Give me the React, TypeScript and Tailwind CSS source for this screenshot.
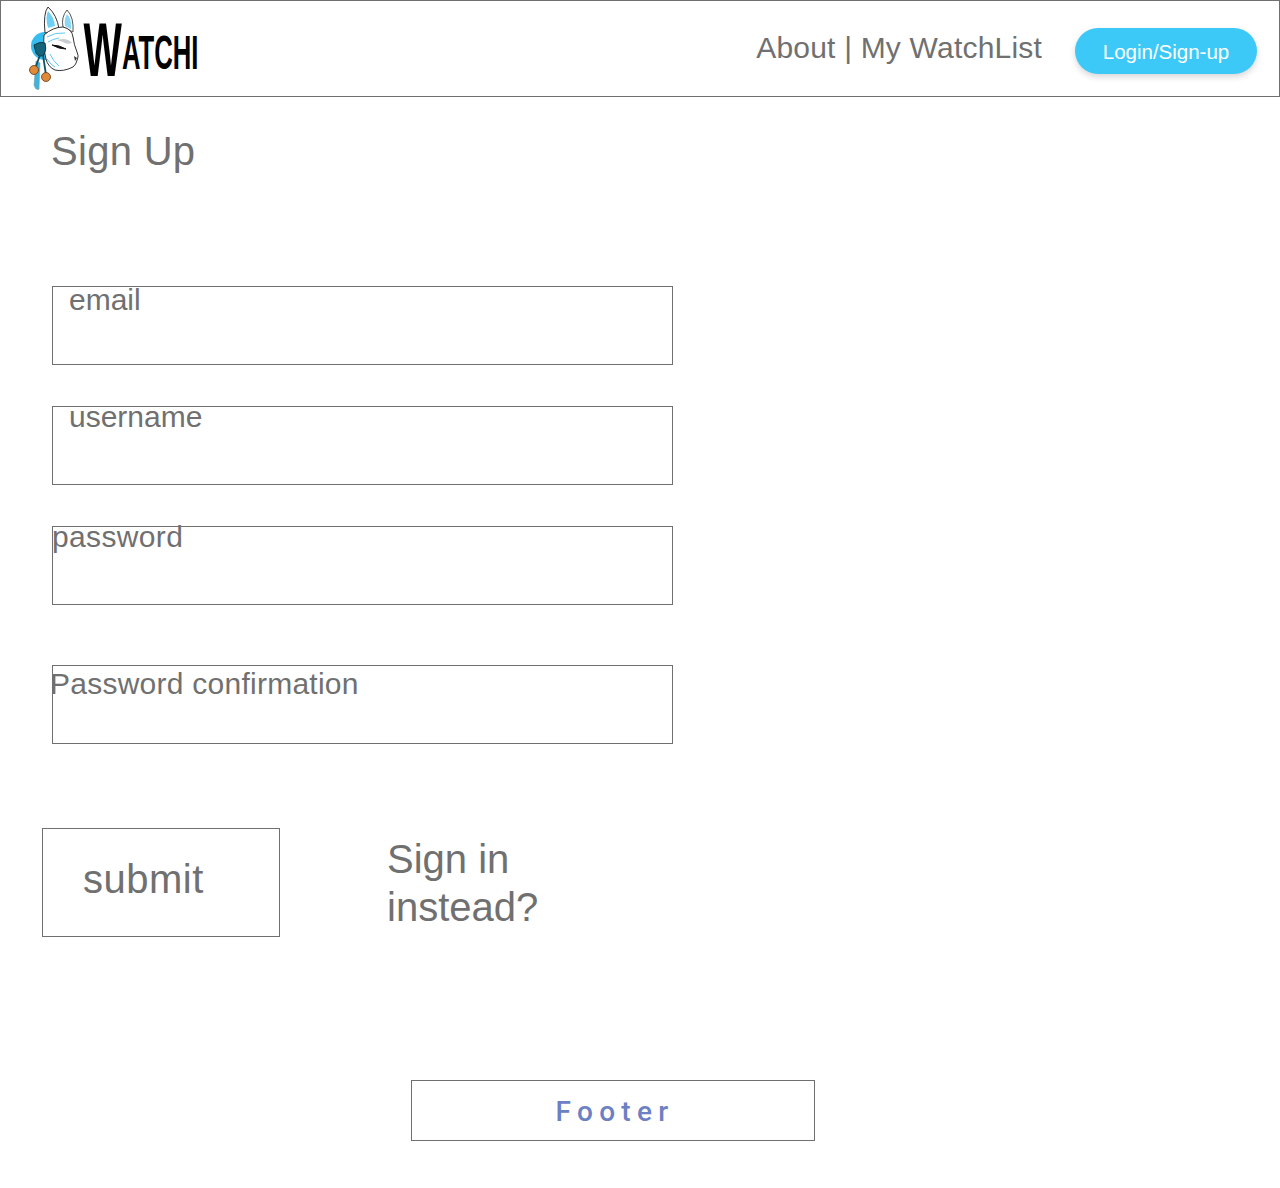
const labelClass = 'text-[30px] leading-[36px] text-[#707070] whitespace-nowrap';

function Logo() {
  return (
    <svg width="180" height="90" viewBox="25 5 180 90" className="block shrink-0" aria-label="Watchi">
      {/* blue disc behind the mask */}
      <circle cx="43" cy="47" r="14" fill="#35bdf0" />
      {/* ribbon and bells */}
      <path d="M34 62 L32 86 Q34 92 37 90 L38 64 Z" fill="#3cb4dc" stroke="#8a9aa0" strokeWidth="0.6" />
      <path d="M38 56 L33 70 M41 56 L44 76" stroke="#14505f" strokeWidth="1.8" fill="none" />
      <circle cx="32" cy="71" r="4.5" fill="#e08a35" stroke="#5a3a1c" strokeWidth="0.8" />
      <circle cx="44" cy="78" r="4.5" fill="#e08a35" stroke="#5a3a1c" strokeWidth="0.8" />
      {/* ears */}
      <path d="M46 8 Q41 14 43 34 L57 30 Q55 16 46 8 Z" fill="#fff" stroke="#333" strokeWidth="1" />
      <path d="M46 12 Q43 18 46 29 L53 27 Q52 18 46 12 Z" fill="#6fd0f5" />
      <path d="M65 11 Q59 18 61 28 L71 33 Q72 18 65 11 Z" fill="#fff" stroke="#555" strokeWidth="1" />
      <path d="M65 15 Q62 20 63 27 L69 30 Q70 20 65 15 Z" fill="#8ad8f5" />
      {/* face */}
      <path
        d="M42 36 Q51 28 61 28 Q70 30 71 38 Q72 46 75 53 Q77 57 75.5 60 Q74 66 71 68 Q61 73 53 71 Q46 68 44 60 Q40 48 42 36 Z"
        fill="#fff"
        stroke="#333"
        strokeWidth="1"
      />
      <path d="M45 38 Q53 33 63 34 M46 43 Q51 40 57 39 M48 55 Q51 62 57 67 M45 60 Q49 66 53 68" stroke="#5cc8f0" strokeWidth="1" fill="none" />
      <path d="M55 41 Q65 38 70 44 Q65 46 61 43 Z" fill="#c9ccce" />
      <path d="M50 46 Q57 46 64 50 Q57 50 50 46 Z" fill="#111" stroke="#111" strokeWidth="1" />
      <path d="M72 57 L75 59 L73 62 Z" fill="#333" />
      {/* knot */}
      <path d="M32 46 Q38 42 43 44 Q45 50 42 56 Q37 59 34 54 Z" fill="#14647a" stroke="#0c3a47" strokeWidth="1" />
      {/* wordmark */}
      <g transform="translate(81.5 0) scale(0.535 1)" fill="#000" fontFamily='"Liberation Sans", sans-serif' fontWeight="700">
        <text y="77">
          <tspan fontSize="76">W</tspan>
          <tspan fontSize="48" dy="-7">ATCHI</tspan>
        </text>
      </g>
    </svg>
  );
}

function Field({ label, offset }: { label: string; offset: string }) {
  return (
    <div className="h-[79px] w-[621px] border border-[#707070]">
      <div className={`${labelClass} ${offset}`}>{label}</div>
    </div>
  );
}

export default function App() {
  return (
    <div className="h-[1188px] w-[1280px] overflow-hidden bg-white font-['Liberation_Sans',sans-serif] text-[#707070]">
      <header className="flex h-[97px] items-center border border-[#707070] pl-[26px] pr-[22px]">
        <Logo />
        <nav className="ml-auto mb-[2px] whitespace-nowrap text-[30px] leading-[36px] tracking-[0.2px]">About | My WatchList</nav>
        <button className="ml-[33px] mt-[4px] h-[46px] w-[182px] rounded-[23px] bg-[#3dc9f8] pt-[4px] text-[20.5px] text-white shadow-[0_3px_6px_rgba(0,0,0,0.16)]">
          Login/Sign-up
        </button>
      </header>

      <main className="pl-[52px]">
        <h1 className="-ml-[1px] pt-[30px] text-[40px] leading-[48px] tracking-[0.3px]">Sign Up</h1>
        <div className="mt-[111px] flex flex-col">
          <Field label="email" offset="-mt-[5px] pl-[16px]" />
          <div className="h-[41px]" />
          <Field label="username" offset="-mt-[8px] pl-[16px]" />
          <div className="h-[41px]" />
          <Field label="password" offset="-mt-[8px] -ml-[1px] tracking-[0.35px]" />
          <div className="h-[60px]" />
          <Field label="Password confirmation" offset="-ml-[3px] tracking-[0.25px]" />
        </div>
        <div className="mt-[84px] flex items-start">
          <button className="-ml-[10px] h-[109px] w-[238px] border border-[#707070] pb-[8px] pl-[40px] text-left text-[40px] leading-[48px] tracking-[0.5px]">
            submit
          </button>
          <p className="ml-[107px] mt-[7px] w-[170px] text-[40px] leading-[48px]">Sign in instead?</p>
        </div>
      </main>

      <footer className="ml-[411px] mt-[143px] flex h-[61px] w-[404px] items-center justify-center border border-[#707070] pl-[4px] pt-[2px] font-['Roboto',sans-serif] text-[28px] font-medium tracking-[0.225em] text-[#6c80c4]">
        Footer
      </footer>
    </div>
  );
}
